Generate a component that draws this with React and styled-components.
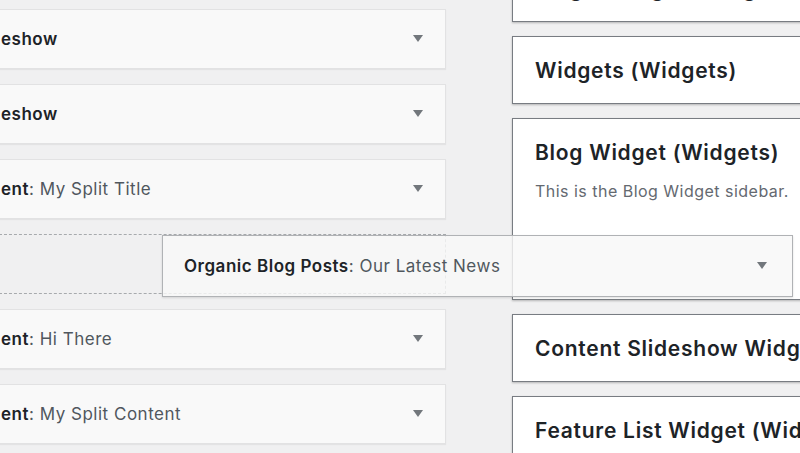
import styled, { createGlobalStyle } from 'styled-components'

const GlobalStyle = createGlobalStyle`
  html, body {
    margin: 0;
    padding: 0;
    background: #f0f0f1;
    font-family: Inter, "Noto Sans", "Liberation Sans", sans-serif;
    -webkit-font-smoothing: antialiased;
  }
  #root {
    width: 800px;
    height: 453px;
    overflow: hidden;
  }
`

const leftWidgets = [
  { name: 'eshow' },
  { name: 'eshow' },
  { name: 'ent', title: 'My Split Title' },
  { placeholder: true },
  { name: 'ent', title: 'Hi There' },
  { name: 'ent', title: 'My Split Content' },
]

const sidebars = [
  { name: 'Single Widget (Widgets)' },
  { name: 'Widgets (Widgets)' },
  { name: 'Blog Widget (Widgets)', description: 'This is the Blog Widget sidebar.', open: true },
  { name: 'Content Slideshow Widget (Widgets)' },
  { name: 'Feature List Widget (Widgets)' },
]

const App = () => {
  return (
    <>
      <GlobalStyle />
      <Page>
        <WidgetList>
          {leftWidgets.map((w, i) =>
            w.placeholder ? (
              <Placeholder key={`ph-${i}`} />
            ) : (
              <Widget key={`w-${i}`}>
                <WidgetTitle>
                  <strong>{w.name}</strong>
                  {w.title && <span>: {w.title}</span>}
                </WidgetTitle>
                <Arrow />
              </Widget>
            )
          )}
        </WidgetList>

        <SidebarList>
          {sidebars.map((s) => (
            <SidebarBox key={s.name}>
              <SidebarName>{s.name}</SidebarName>
              {s.description && <SidebarDesc>{s.description}</SidebarDesc>}
              {s.open && <DropZone />}
            </SidebarBox>
          ))}
        </SidebarList>

        <DragHelper>
          <WidgetTitle>
            <strong>Organic Blog Posts</strong>
            <span>: Our Latest News</span>
          </WidgetTitle>
          <Arrow />
        </DragHelper>
      </Page>
    </>
  )
}

export default App

const Page = styled.div`
  position: relative;
  display: flex;
  align-items: flex-start;
  width: 800px;
  height: 453px;
  overflow: hidden;
`

const WidgetList = styled.div`
  flex: none;
  display: flex;
  flex-direction: column;
  gap: 15px;
  width: 447px;
  margin-left: -1px;
  margin-top: 9px;
`

const Widget = styled.div`
  box-sizing: border-box;
  display: flex;
  align-items: center;
  justify-content: space-between;
  height: 60px;
  padding: 0 22px 0 1px;
  background: #f9f9f9;
  border: 1px solid #e2e2e3;
  box-shadow: 0 1px 1px rgba(0, 0, 0, 0.05);
`

const WidgetTitle = styled.div`
  font-size: 17px;
  line-height: 24px;
  letter-spacing: 0.03em;
  white-space: nowrap;
  color: #50575e;
  strong {
    font-weight: 600;
    color: #1d2327;
  }
`

const Arrow = styled.span`
  flex: none;
  width: 0;
  height: 0;
  border-left: 5px solid transparent;
  border-right: 5px solid transparent;
  border-top: 7px solid #72777c;
  margin-top: -2px;
`

const Placeholder = styled.div`
  box-sizing: border-box;
  height: 60px;
  border: 1px dashed #a7aaad;
  background: #f0f0f1;
`

const SidebarList = styled.div`
  flex: none;
  display: flex;
  flex-direction: column;
  gap: 14px;
  width: 320px;
  margin-left: 66px;
  margin-top: -46px;
`

const SidebarBox = styled.div`
  box-sizing: border-box;
  padding: 19px 22px 18px;
  background: #fff;
  border: 1px solid #787c82;
  box-shadow: 0 1px 2px rgba(0, 0, 0, 0.25);
`

const SidebarName = styled.h2`
  margin: 0;
  font-size: 21px;
  line-height: 29px;
  font-weight: 600;
  letter-spacing: 0.035em;
  color: #1d2327;
  white-space: nowrap;
`

const SidebarDesc = styled.p`
  margin: 12px 0 0;
  font-size: 16px;
  line-height: 24px;
  letter-spacing: 0.03em;
  color: #646970;
  white-space: nowrap;
`

const DropZone = styled.div`
  height: 78px;
`

const DragHelper = styled.div`
  position: absolute;
  left: 162px;
  top: 235px;
  box-sizing: border-box;
  display: flex;
  align-items: center;
  justify-content: space-between;
  width: 631px;
  height: 62px;
  padding: 0 25px 0 21px;
  background: rgba(248, 248, 248, 0.82);
  border: 1px solid #b0b2b5;
  box-shadow: 0 1px 2px rgba(0, 0, 0, 0.12);
`
